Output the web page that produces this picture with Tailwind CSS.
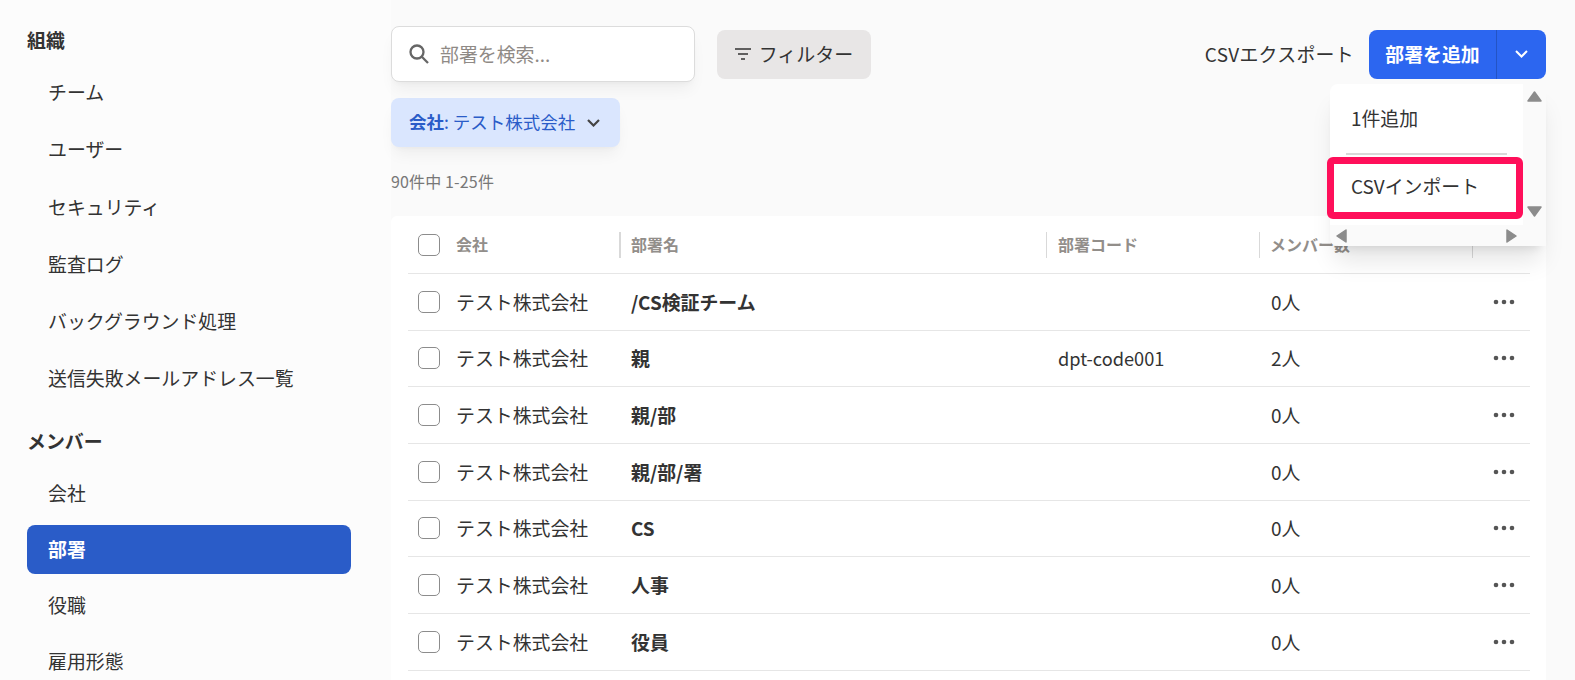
<!DOCTYPE html>
<html lang="ja">
<head>
<meta charset="UTF-8">
<title>部署</title>
<script src="https://cdn.jsdelivr.net/npm/@tailwindcss/browser@4"></script>
</head>
<body class="w-[1575px] h-[680px] overflow-hidden bg-[#fafafa] text-[#333] text-[18.9px] font-['Noto_Sans_CJK_JP','Noto_Sans',sans-serif]">
<div class="flex h-[680px] overflow-hidden">
  <!-- sidebar -->
  <aside class="w-[391px] flex-none bg-[#fcfcfc] pl-[27px] pr-[40px] pt-[24px]">
    <h2 class="h-[32px] leading-[32px] font-bold">組織</h2>
    <nav class="mt-[7px]">
      <a class="block h-[57.25px] leading-[57.25px] pl-[21px]">チーム</a>
      <a class="block h-[57.25px] leading-[57.25px] pl-[21px]">ユーザー</a>
      <a class="block h-[57.25px] leading-[57.25px] pl-[21px]">セキュリティ</a>
      <a class="block h-[57.25px] leading-[57.25px] pl-[21px]">監査ログ</a>
      <a class="block h-[57.25px] leading-[57.25px] pl-[21px]">バックグラウンド処理</a>
      <a class="block h-[57.25px] leading-[57.25px] pl-[21px]">送信失敗メールアドレス一覧</a>
    </nav>
    <h2 class="mt-[18.5px] h-[32px] leading-[32px] font-bold">メンバー</h2>
    <nav class="mt-[12px]">
      <a class="block h-[48px] leading-[48px] pl-[21px]">会社</a>
      <a class="block h-[49px] leading-[47px] pl-[21px] mt-[8px] rounded-lg bg-[#2a5cc8] text-white font-bold">部署</a>
      <a class="block h-[48px] leading-[48px] pl-[21px] mt-[7px]">役職</a>
      <a class="block h-[48px] leading-[48px] pl-[21px] mt-[8px]">雇用形態</a>
    </nav>
  </aside>

  <main class="relative w-[1155px] flex-none pt-[26px]">
    <div class="flex items-center h-[56px]">
      <div class="w-[304px] h-[56px] flex items-center pl-[17px] gap-[11px] bg-white border border-[#dcdcdc] rounded-lg shadow-lg shadow-black/5">
        <svg class="w-[20px] h-[20px] text-[#666]" viewBox="0 0 20 20" fill="none" stroke="currentColor" stroke-width="2.3"><circle cx="8" cy="8" r="6.500"/><path d="M12.800 12.800 19 19"/></svg>
        <span class="text-[#8f8a86]">部署を検索...</span>
      </div>
      <button class="ml-[22px] w-[154px] h-[49px] flex items-center justify-center gap-[8px] rounded-lg bg-[#e8e6e6]">
        <svg class="w-[16px] h-[12px]" viewBox="0 0 16 12" fill="none" stroke="#333" stroke-width="1.600"><path d="M0 1h16M3 6h10M6 11h4"/></svg>
        <span class="text-[19px]">フィルター</span>
      </button>
      <span class="ml-auto tracking-[0.3px]">CSVエクスポート</span>
      <div class="ml-[15px] w-[177px] h-[49px] flex rounded-lg bg-[#2c66f0] text-white font-bold">
        <span class="w-[128px] leading-[48px] text-center border-r border-[#2454c4]">部署を追加</span>
        <span class="flex-1 flex items-center justify-center">
          <svg class="w-[13px] h-[8px]" viewBox="0 0 13 8" fill="none" stroke="white" stroke-width="2"><path d="M1 1l5.500 5.500L12 1"/></svg>
        </span>
      </div>
    </div>

    <div class="mt-[16px] w-[229px] h-[49px] flex items-center pl-[18px] gap-[12px] rounded-lg bg-[#dae6fe] text-[#2a5cc8] text-[17.5px] shadow-lg shadow-black/5">
      <span><b>会社</b>: テスト株式会社</span>
      <svg class="w-[13px] h-[8px]" viewBox="0 0 13 8" fill="none" stroke="#444" stroke-width="2.200"><path d="M1 1l5.500 5.500L12 1"/></svg>
    </div>

    <p class="mt-[23px] h-[22px] leading-[22px] text-[16px] tracking-[0.15px] text-[#777]">90件中 1-25件</p>

    <section class="mt-[24px] h-[464px] bg-white rounded-t-md pl-[17px] pr-[16px]">
      <div class="flex items-center h-[58px] pb-[2px] border-b border-[#e6e6e6] font-bold text-[16px] text-[#928e8a]">
        <span class="ml-[10px] w-[22px] h-[22px] mt-[2px] rounded-[5px] border border-[#8c8c8c] bg-white"></span>
        <span class="ml-[16px] w-[163px]">会社</span>
        <span class="w-[2px] h-[26px] mt-[2px] bg-[#d9d9d9]"></span>
        <span class="pl-[10px] w-[425px]">部署名</span>
        <span class="w-[1px] h-[26px] mt-[2px] bg-[#d9d9d9]"></span>
        <span class="pl-[11px] w-[212px]">部署コード</span>
        <span class="w-[1px] h-[26px] mt-[2px] bg-[#d9d9d9]"></span>
        <span class="pl-[10px] w-[212px]">メンバー数</span>
        <span class="w-[1px] h-[26px] mt-[2px] bg-[#d9d9d9]"></span>
      </div>

      <div class="flex items-center h-[56.67px] border-b border-[#e6e6e6]">
        <span class="ml-[10px] w-[22px] h-[22px] rounded-[5px] border border-[#8c8c8c]"></span>
        <span class="ml-[16px] w-[175px]">テスト株式会社</span>
        <span class="w-[427px] font-bold">/CS検証チーム</span>
        <span class="w-[213px]"></span>
        <span class="w-[213px]">0人</span>
        <svg class="ml-[9px] w-[22px] h-[6px]" viewBox="0 0 22 6" fill="#555"><circle cx="3" cy="3" r="2.300"/><circle cx="11" cy="3" r="2.300"/><circle cx="19" cy="3" r="2.300"/></svg>
      </div>
      <div class="flex items-center h-[56.67px] border-b border-[#e6e6e6]">
        <span class="ml-[10px] w-[22px] h-[22px] rounded-[5px] border border-[#8c8c8c]"></span>
        <span class="ml-[16px] w-[175px]">テスト株式会社</span>
        <span class="w-[427px] font-bold">親</span>
        <span class="w-[213px] text-[18.2px]">dpt-code001</span>
        <span class="w-[213px]">2人</span>
        <svg class="ml-[9px] w-[22px] h-[6px]" viewBox="0 0 22 6" fill="#555"><circle cx="3" cy="3" r="2.300"/><circle cx="11" cy="3" r="2.300"/><circle cx="19" cy="3" r="2.300"/></svg>
      </div>
      <div class="flex items-center h-[56.67px] border-b border-[#e6e6e6]">
        <span class="ml-[10px] w-[22px] h-[22px] rounded-[5px] border border-[#8c8c8c]"></span>
        <span class="ml-[16px] w-[175px]">テスト株式会社</span>
        <span class="w-[427px] font-bold">親/部</span>
        <span class="w-[213px]"></span>
        <span class="w-[213px]">0人</span>
        <svg class="ml-[9px] w-[22px] h-[6px]" viewBox="0 0 22 6" fill="#555"><circle cx="3" cy="3" r="2.300"/><circle cx="11" cy="3" r="2.300"/><circle cx="19" cy="3" r="2.300"/></svg>
      </div>
      <div class="flex items-center h-[56.67px] border-b border-[#e6e6e6]">
        <span class="ml-[10px] w-[22px] h-[22px] rounded-[5px] border border-[#8c8c8c]"></span>
        <span class="ml-[16px] w-[175px]">テスト株式会社</span>
        <span class="w-[427px] font-bold">親/部/署</span>
        <span class="w-[213px]"></span>
        <span class="w-[213px]">0人</span>
        <svg class="ml-[9px] w-[22px] h-[6px]" viewBox="0 0 22 6" fill="#555"><circle cx="3" cy="3" r="2.300"/><circle cx="11" cy="3" r="2.300"/><circle cx="19" cy="3" r="2.300"/></svg>
      </div>
      <div class="flex items-center h-[56.67px] border-b border-[#e6e6e6]">
        <span class="ml-[10px] w-[22px] h-[22px] rounded-[5px] border border-[#8c8c8c]"></span>
        <span class="ml-[16px] w-[175px]">テスト株式会社</span>
        <span class="w-[427px] font-bold">CS</span>
        <span class="w-[213px]"></span>
        <span class="w-[213px]">0人</span>
        <svg class="ml-[9px] w-[22px] h-[6px]" viewBox="0 0 22 6" fill="#555"><circle cx="3" cy="3" r="2.300"/><circle cx="11" cy="3" r="2.300"/><circle cx="19" cy="3" r="2.300"/></svg>
      </div>
      <div class="flex items-center h-[56.67px] border-b border-[#e6e6e6]">
        <span class="ml-[10px] w-[22px] h-[22px] rounded-[5px] border border-[#8c8c8c]"></span>
        <span class="ml-[16px] w-[175px]">テスト株式会社</span>
        <span class="w-[427px] font-bold">人事</span>
        <span class="w-[213px]"></span>
        <span class="w-[213px]">0人</span>
        <svg class="ml-[9px] w-[22px] h-[6px]" viewBox="0 0 22 6" fill="#555"><circle cx="3" cy="3" r="2.300"/><circle cx="11" cy="3" r="2.300"/><circle cx="19" cy="3" r="2.300"/></svg>
      </div>
      <div class="flex items-center h-[56.67px] border-b border-[#e6e6e6]">
        <span class="ml-[10px] w-[22px] h-[22px] rounded-[5px] border border-[#8c8c8c]"></span>
        <span class="ml-[16px] w-[175px]">テスト株式会社</span>
        <span class="w-[427px] font-bold">役員</span>
        <span class="w-[213px]"></span>
        <span class="w-[213px]">0人</span>
        <svg class="ml-[9px] w-[22px] h-[6px]" viewBox="0 0 22 6" fill="#555"><circle cx="3" cy="3" r="2.300"/><circle cx="11" cy="3" r="2.300"/><circle cx="19" cy="3" r="2.300"/></svg>
      </div>
    </section>

    <!-- dropdown menu, with its always-on scrollbars -->
    <div class="absolute left-[939px] top-[84px] w-[216px] h-[162px] rounded-l-lg bg-[#fafafa] shadow-xl shadow-black/10 flex flex-col">
      <div class="flex h-[141px]">
        <div class="w-[193px] bg-white rounded-tl-lg">
          <div class="h-[69px] leading-[68px] pl-[21px]">1件追加</div>
          <div class="mx-[16px] h-[2px] bg-[#d9d9d9]"></div>
          <div class="h-[70px] leading-[62px] pl-[21px]">CSVインポート</div>
        </div>
        <div class="flex-1 flex flex-col items-center justify-between pt-[7px] pb-[8px]">
          <svg class="w-[15px] h-[11px]" viewBox="0 0 15 11" fill="#8c8c8c" stroke="#8c8c8c" stroke-width="1.500" stroke-linejoin="round"><path d="M7.500 1 14 10H1z"/></svg>
          <svg class="w-[15px] h-[11px]" viewBox="0 0 15 11" fill="#8c8c8c" stroke="#8c8c8c" stroke-width="1.500" stroke-linejoin="round"><path d="M1 1h13L7.500 10z"/></svg>
        </div>
      </div>
      <div class="flex-1 flex items-center justify-between pl-[6px] pr-[29px]">
        <svg class="w-[11px] h-[14px]" viewBox="0 0 11 14" fill="#8c8c8c" stroke="#8c8c8c" stroke-width="1.500" stroke-linejoin="round"><path d="M10 1v12L1 7z"/></svg>
        <svg class="w-[11px] h-[14px]" viewBox="0 0 11 14" fill="#8c8c8c" stroke="#8c8c8c" stroke-width="1.500" stroke-linejoin="round"><path d="M1 1l9 6-9 6z"/></svg>
      </div>
    </div>
    <!-- red annotation box -->
    <div class="absolute left-[936px] top-[157px] w-[196px] h-[62px] border-[7px] border-[#ff0f5a] rounded-[6px]"></div>
  </main>
</div>
</body>
</html>
